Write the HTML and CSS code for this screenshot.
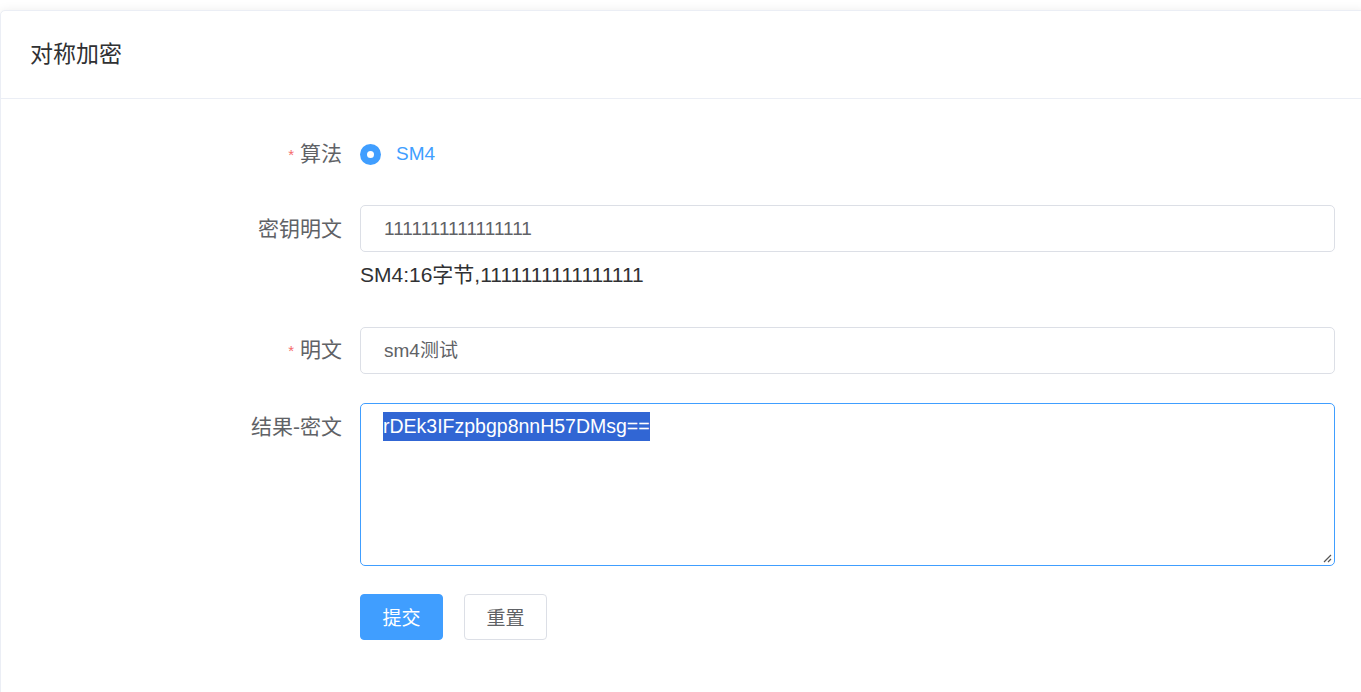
FILE: index.html
```html
<!DOCTYPE html>
<html lang="zh-CN">
<head>
<meta charset="utf-8">
<title>对称加密</title>
<link rel="stylesheet" href="styles.css">
</head>
<body>
<div class="card">
  <div class="card-header">对称加密</div>
  <div class="card-body">
    <form class="form">
      <div class="row">
        <label class="label"><span class="req">*</span>算法</label>
        <div class="content">
          <span class="radio"><span class="radio-dot"></span></span>
          <span class="radio-text">SM4</span>
        </div>
      </div>
      <div class="row">
        <label class="label">密钥明文</label>
        <div class="content col">
          <div class="input">1111111111111111</div>
          <div class="help">SM4:16字节,1111111111111111</div>
        </div>
      </div>
      <div class="row">
        <label class="label"><span class="req">*</span>明文</label>
        <div class="content">
          <div class="input">sm4测试</div>
        </div>
      </div>
      <div class="row row-area">
        <label class="label">结果-密文</label>
        <div class="content">
          <div class="textarea"><span class="sel">rDEk3IFzpbgp8nnH57DMsg==</span>
            <svg class="grip" width="9" height="9" viewBox="0 0 9 9"><path d="M8 1 L1 8 M8 5 L5 8" stroke="#555" stroke-width="1.2"/></svg>
          </div>
        </div>
      </div>
      <div class="row">
        <div class="label"></div>
        <div class="content">
          <button type="button" class="btn btn-primary">提交</button>
          <button type="button" class="btn btn-default">重置</button>
        </div>
      </div>
    </form>
  </div>
</div>
</body>
</html>
```
FILE: styles.css
```css
html, body {
  margin: 0;
  padding: 0;
  background: #fff;
}
body {
  padding-top: 10px;
  font-family: "Liberation Sans", "Noto Sans CJK SC", sans-serif;
  overflow: hidden;
}
.card {
  border: 1px solid #ebeef5;
  border-radius: 5px;
  background: #fff;
  box-shadow: 0 2px 12px rgba(0, 0, 0, 0.1);
  margin-right: -6px;
  height: 700px;
}
.card-header {
  height: 88px;
  box-sizing: border-box;
  line-height: 86px;
  padding: 0 29px;
  font-size: 23px;
  color: #303133;
  border-bottom: 1px solid #ebeef5;
}
.form {
  padding: 31px 31px 0 0;
}
.row {
  display: flex;
  margin-bottom: 29px;
}
.row:first-child {
  margin-bottom: 27px;
}
.row.row-area {
  margin-bottom: 27px;
}
.label {
  width: 359px;
  flex: none;
  box-sizing: border-box;
  padding-right: 18px;
  text-align: right;
  font-size: 21px;
  line-height: 47px;
  color: #606266;
}
.req {
  color: #f56c6c;
  font-size: 15px;
  margin-right: 6px;
  vertical-align: 1px;
}
.content {
  flex: 1;
  display: flex;
  align-items: center;
  min-height: 47px;
}
.content.col {
  flex-direction: column;
  align-items: stretch;
}
.radio {
  width: 21px;
  height: 21px;
  border-radius: 50%;
  background: #409eff;
  display: flex;
  align-items: center;
  justify-content: center;
}
.radio-dot {
  width: 7px;
  height: 7px;
  border-radius: 50%;
  background: #fff;
}
.radio-text {
  margin-left: 15px;
  font-size: 19px;
  color: #409eff;
}
.input {
  flex: 1;
  height: 47px;
  box-sizing: border-box;
  border: 1px solid #dcdfe6;
  border-radius: 5px;
  padding: 0 23px;
  font-size: 19px;
  line-height: 45px;
  color: #606266;
}
.content.col .input {
  flex: none;
}
.help {
  font-size: 21px;
  line-height: 45px;
  color: #303133;
}
.textarea {
  position: relative;
  flex: 1;
  height: 163px;
  box-sizing: border-box;
  border: 1px solid #409eff;
  border-radius: 5px;
  padding: 8px 22px;
  font-size: 19.5px;
  line-height: 28px;
  color: #606266;
}
.sel {
  background: #3166d4;
  color: #fff;
  display: inline-block;
  line-height: 29px;
}
.grip {
  position: absolute;
  right: 2px;
  bottom: 2px;
}
.btn {
  height: 46px;
  box-sizing: border-box;
  width: 83px;
  border-radius: 4px;
  font-family: inherit;
  font-size: 19px;
  cursor: pointer;
  padding: 0;
}
.btn-primary {
  background: #409eff;
  border: 1px solid #409eff;
  color: #fff;
}
.btn-default {
  background: #fff;
  border: 1px solid #dcdfe6;
  color: #606266;
  margin-left: 21px;
}
```
